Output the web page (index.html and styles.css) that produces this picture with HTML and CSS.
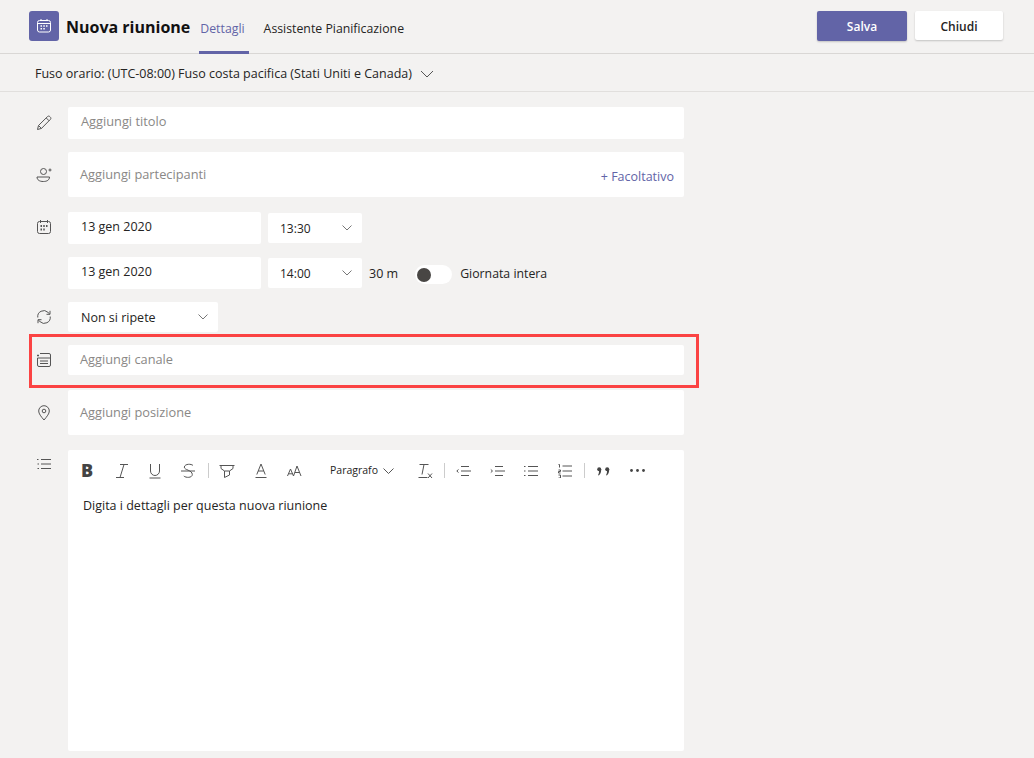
FILE: index.html
```html
<!DOCTYPE html>
<html lang="en">
<head>
  <meta charset="UTF-8">
  <title>Nuova riunione</title>
  <link rel="stylesheet" href="styles.css">
</head>
<body>
  <header class="topbar">
    <div class="app-tile">
      <svg width="16" height="16" viewBox="0 0 16 16" fill="none" stroke="#fff" stroke-width="1">
        <rect x="1.5" y="2.5" width="13" height="11.5" rx="2"/>
        <path d="M2 5.5h12"/>
        <path d="M5 1v2M11 1v2" />
        <path d="M4.5 8h1.5M7.3 8h1.5M10 8h1.5M4.5 10.7h1.5M7.3 10.7h1.5" stroke-width="1.4"/>
      </svg>
    </div>
    <h1 class="title">Nuova riunione</h1>
    <nav class="tabs">
      <a class="tab active">Dettagli</a>
      <a class="tab">Assistente Pianificazione</a>
    </nav>
    <div class="actions">
      <button class="btn primary">Salva</button>
      <button class="btn">Chiudi</button>
    </div>
  </header>

  <div class="zone">
    <span>Fuso orario: (UTC-08:00) Fuso costa pacifica (Stati Uniti e Canada)</span>
    <svg class="zone-chevron" width="14" height="8" viewBox="0 0 14 8" fill="none" stroke="#555" stroke-width="1"><path d="M1 1l6 6 6-6"/></svg>
  </div>

  <main class="form">
    <div class="row row-title">
      <svg class="row-icon" width="16" height="16" viewBox="0 0 16 16" fill="none" stroke="#555" stroke-width="1">
        <path d="M1.5 14.5l1-4L11.5 1.6c.7-.7 1.7-.7 2.3 0l.6.6c.6.6.6 1.6 0 2.2L5.5 13.4z"/>
        <path d="M2.5 10.5l3 3M10.3 3l2.8 2.8"/>
      </svg>
      <div class="field wide h32 placeholder">Aggiungi titolo</div>
    </div>

    <div class="row row-people">
      <svg class="row-icon icon-low" width="16" height="16" viewBox="0 0 16 16" fill="none" stroke="#555" stroke-width="1">
        <circle cx="7.5" cy="4.5" r="3"/>
        <path d="M1 10h12.5c0 3-2.5 4.5-6.2 4.5S1 13 1 10z"/>
        <path d="M12.5 3h3M14 1.5v3"/>
      </svg>
      <div class="field wide h45 placeholder people">
        <span>Aggiungi partecipanti</span>
        <span class="optional">+ Facoltativo</span>
      </div>
    </div>

    <div class="row row-date">
      <svg class="row-icon" width="14" height="14" viewBox="0 0 14 14" fill="none" stroke="#555" stroke-width="1">
        <rect x=".5" y="1.5" width="13" height="12" rx="2"/>
        <path d="M3.5 0v3M10.500 0v3"/>
        <path d="M3.500 6h1.500M6.250 6h1.500M9 6h1.500M3.500 9.500h1.500M6.250 9.500h1.500" stroke-width="1.800"/>
      </svg>
      <div class="field date">13 gen 2020</div>
      <div class="field time">
        <span>13:30</span>
        <svg class="chevron" width="10" height="6" viewBox="0 0 10 6" fill="none" stroke="#777" stroke-width="1"><path d="M.5.5L5 5 9.500.5"/></svg>
      </div>
    </div>

    <div class="row row-date">
      <div class="row-icon"></div>
      <div class="field date">13 gen 2020</div>
      <div class="field time">
        <span>14:00</span>
        <svg class="chevron" width="10" height="6" viewBox="0 0 10 6" fill="none" stroke="#777" stroke-width="1"><path d="M.5.5L5 5 9.500.5"/></svg>
      </div>
      <span class="duration">30 m</span>
      <span class="toggle"><span class="knob"></span></span>
      <span class="allday">Giornata intera</span>
    </div>

    <div class="row row-repeat">
      <svg class="row-icon" width="14" height="14" viewBox="0 0 14 14" fill="none" stroke="#555" stroke-width="1">
        <path d="M.8 7.500A6 6 0 0 1 11 2.400L12.700 4"/>
        <path d="M13 .8v3.500H9.500"/>
        <path d="M13.200 6.500A6 6 0 0 1 3 11.600L1.300 10"/>
        <path d="M1 13.200V9.700h3.500"/>
      </svg>
      <div class="field repeat">
        <span>Non si ripete</span>
        <svg class="chevron" width="10" height="6" viewBox="0 0 10 6" fill="none" stroke="#777" stroke-width="1"><path d="M.5.5L5 5 9.500.5"/></svg>
      </div>
    </div>

    <div class="row row-channel">
      <svg class="row-icon" width="14" height="14" viewBox="0 0 14 14" fill="none" stroke="#555" stroke-width="1">
        <path d="M3 .5h9a1.500 1.500 0 0 1 1.500 1.500v10a1.500 1.500 0 0 1-1.500 1.500H2A1.500 1.500 0 0 1 .5 12V5h13"/>
        <path d="M3 8h8M3 10.500h8"/>
        <path d="M0 2.500h2" stroke-width="1.500"/>
      </svg>
      <div class="field wide h30 placeholder">Aggiungi canale</div>
      <div class="callout"></div>
    </div>

    <div class="row row-location">
      <svg class="row-icon icon-low" width="12" height="16" viewBox="0 0 12 16" fill="none" stroke="#555" stroke-width="1">
        <path d="M6 15C3 11.500 .7 8.700 .7 6A5.300 5.300 0 0 1 11.300 6C11.300 8.700 9 11.500 6 15z"/>
        <circle cx="6" cy="6" r="1.800"/>
      </svg>
      <div class="field wide h45 placeholder">Aggiungi posizione</div>
    </div>

    <div class="row row-editor">
      <svg class="row-icon" width="14" height="12" viewBox="0 0 14 12" fill="none" stroke="#555" stroke-width="1">
        <path d="M4 1.500h10M4 6h10M4 10.500h10"/>
        <path d="M0 1.500h1.500M.5 6h1.500M.5 10.500h1.500" stroke-width="1.200"/>
      </svg>
      <div class="editor">
        <div class="toolbar">
          <span class="tool tool-bold">B</span>
          <svg class="tool-svg t-italic" width="14" height="16" viewBox="0 0 14 16" fill="none" stroke="#555"><path d="M5 1.500h8M9 1.500L5 14.500M1 14.500h8"/></svg>
          <svg class="tool-svg t-under" width="14" height="16" viewBox="0 0 14 16" fill="none" stroke="#555"><path d="M2.500 1v7a4.500 4.500 0 0 0 9 0V1M1.500 15h11"/></svg>
          <svg class="tool-svg t-strike" width="14" height="16" viewBox="0 0 14 16" fill="none" stroke="#555"><path d="M12 2.500C10.500.8 4 .5 3.300 4c-.5 3 8 3 8 7.500 0 3.500-6.500 3.500-8.500 1.500M0 8h14"/></svg>
          <span class="sep sep-a"></span>
          <svg class="tool-svg t-mark" width="16" height="16" viewBox="0 0 16 16" fill="none" stroke="#555"><path d="M.5 2.500h15M2 2.500v3l3.500 2.500v6.500l5-2.500V8L14 5.500v-3M5.500 8h5"/></svg>
          <svg class="tool-svg t-color" width="12" height="16" viewBox="0 0 12 16" fill="none" stroke="#555"><path d="M1.800 11.500L6 1l4.200 10.500M3.200 8h5.600M.5 14.500h11"/></svg>
          <svg class="tool-svg t-size" width="15" height="12" viewBox="0 0 15 12" fill="none" stroke="#555"><path d="M.5 11L3.500 4l3 7M1.500 8.800h4M6.500 11L10 1l4 10M8 7.500h4.500"/></svg>
          <span class="para">Paragrafo</span>
          <svg class="tool-svg t-parachev" width="11" height="6" viewBox="0 0 11 6" fill="none" stroke="#555"><path d="M.5.500l5 5 5-5"/></svg>
          <svg class="tool-svg t-clear" width="15" height="16" viewBox="0 0 15 16" fill="none" stroke="#555"><path d="M1.500 1.500h9M6 1.500L4 11.500M.5 14.500h9M10 10.500l4 4.500M14 10.500L10 15"/></svg>
          <span class="sep sep-b"></span>
          <svg class="tool-svg t-out" width="15" height="12" viewBox="0 0 15 12" fill="none" stroke="#555"><path d="M5 1.500h8M5 6h10M5 10.500h8M2.500 4.500L.8 6l1.700 1.500"/></svg>
          <svg class="tool-svg t-in" width="15" height="12" viewBox="0 0 15 12" fill="none" stroke="#555"><path d="M5 1.500h8M5 6h10M5 10.500h8M.8 4.500L2.500 6 .8 7.500"/></svg>
          <svg class="tool-svg t-ul" width="14" height="12" viewBox="0 0 14 12" fill="none" stroke="#555"><path d="M4 1.500h10M4 6h10M4 10.500h10M0 1.500h1.500M0 6h1.500M0 10.500h1.500"/></svg>
          <svg class="tool-svg t-ol" width="14" height="14" viewBox="0 0 14 14" fill="none" stroke="#555"><path d="M4.500 2h9.500M4.500 7h9.500M4.500 12h9.500M.5 .5h1v3M.5 6h2v1.500h-2v1.500h2M.5 11h2v3h-2"/></svg>
          <span class="sep sep-c"></span>
          <svg class="tool-svg t-quote" width="13" height="9" viewBox="0 0 13 9" fill="#444"><circle cx="2.200" cy="2.200" r="2"/><path d="M4.200 2.200C4.200 5 3.500 7 1.800 8.500L1 8c1-1.500 1-3 1-4z"/><circle cx="10.200" cy="2.200" r="2"/><path d="M12.200 2.200c0 2.800-.7 4.800-2.400 6.300L9 8c1-1.500 1-3 1-4z"/></svg>
          <svg class="tool-svg t-more" width="15" height="3" viewBox="0 0 15 3"><circle cx="1.500" cy="1.500" r="1.400" fill="#444"/><circle cx="7.500" cy="1.500" r="1.400" fill="#444"/><circle cx="13.500" cy="1.500" r="1.400" fill="#444"/></svg>
        </div>
        <p class="editor-text">Digita i dettagli per questa nuova riunione</p>
      </div>
    </div>
  </main>
</body>
</html>
```

FILE: styles.css
```css
* {
  box-sizing: border-box;
}
body {
  margin: 0;
  background-color: #f3f2f1;
  font-family: "Open Sans", "Noto Sans", sans-serif;
  font-size: 12.5px;
  color: #252423;
}
.topbar {
  display: flex;
  align-items: center;
  height: 54px;
  padding: 0 31px 2px 29px;
  border-bottom: 1px solid #d9d7d5;
}
.app-tile {
  display: flex;
  align-items: center;
  justify-content: center;
  width: 30px;
  height: 30px;
  background-color: #6264a7;
  border-radius: 3px;
}
.title {
  margin: 2px 0 0 7px;
  font-size: 16px;
  font-weight: 700;
  color: #111;
  white-space: nowrap;
}
.tabs {
  display: flex;
  margin-left: 9px;
  align-self: stretch;
}
.tab {
  display: flex;
  align-items: center;
  padding: 6px 4px 0 1px;
  margin-bottom: -3px;
  margin-right: 14px;
  font-size: 12.3px;
  border-bottom: 3px solid transparent;
  white-space: nowrap;
}
.tab.active {
  color: #6264a7;
  border-bottom-color: #6264a7;
}
.actions {
  display: flex;
  align-items: center;
  gap: 8px;
  margin-left: auto;
}
.btn {
  width: 88px;
  height: 29px;
  padding: 2px 0 0;
  font-family: inherit;
  font-size: 12px;
  font-weight: 600;
  color: #252423;
  background-color: #fff;
  border: none;
  border-radius: 2px;
  box-shadow: 0 1px 2px rgba(0, 0, 0, 0.2);
}
.btn.primary {
  width: 90px;
  height: 30px;
  color: #fff;
  background-color: #6264a7;
}
.zone {
  display: flex;
  align-items: center;
  height: 38px;
  padding: 2px 0 0 35px;
  border-bottom: 1px solid #e1dfdd;
}
.zone-chevron {
  margin-left: 8px;
}
.form {
  padding: 15px 0 0 29px;
}
.row {
  position: relative;
  display: flex;
  align-items: flex-start;
  width: 655px;
}
.row-icon {
  flex: none;
  width: 16px;
  margin: 8px 16px 0 7px;
}
.icon-low {
  margin-top: 15px;
}
.row-people { margin-top: 13px; }
.row-date { margin-top: 15px; }
.row-date + .row-date { margin-top: 13px; }
.row-repeat { margin-top: 13px; }
.row-channel { margin-top: 13px; }
.row-location { margin-top: 15px; }
.row-editor { margin-top: 15px; }
.field {
  display: flex;
  align-items: center;
  background-color: #fff;
  border-radius: 2px;
  color: #252423;
}
.placeholder {
  color: #8a8886;
  font-size: 12.8px;
}
.wide {
  flex: 1;
  padding-left: 13px;
  padding-right: 10px;
}
.h32 { height: 32px; padding-bottom: 5px; }
.h30 { height: 30px; padding-left: 12px; padding-bottom: 2px; }
.h45 { height: 45px; padding-left: 12px; padding-bottom: 2px; }
.people {
  justify-content: space-between;
}
.optional {
  margin-top: 5px;
  font-size: 12.5px;
  color: #6264a7;
}
.date {
  width: 193px;
  height: 32px;
  padding: 0 13px 3px;
}
.time {
  justify-content: space-between;
  width: 94px;
  height: 30px;
  margin: 1px 0 0 7px;
  padding: 0 10px 0 12px;
  font-size: 12px;
}
.repeat {
  justify-content: space-between;
  width: 150px;
  height: 30px;
  padding: 0 10px 0 13px;
}
.duration {
  margin: 8px 0 0 7px;
}
.toggle {
  display: flex;
  align-items: center;
  width: 37px;
  height: 19px;
  margin: 8px 0 0 17px;
  padding-left: 2px;
  background-color: #fff;
  border-radius: 10px;
}
.knob {
  width: 14px;
  height: 14px;
  background-color: #484644;
  border-radius: 50%;
}
.allday {
  margin: 8px 0 0 8px;
  font-size: 12.3px;
}
.callout {
  position: absolute;
  top: -11px;
  left: 0;
  width: 670px;
  height: 54px;
  border: 3px solid #fb4343;
  pointer-events: none;
}
.editor {
  flex: 1;
  height: 301px;
  background-color: #fff;
  border-radius: 2px;
}
.toolbar {
  position: relative;
  height: 40px;
}
.tool-svg, .tool, .para, .sep {
  position: absolute;
}
.tool-bold {
  left: 13px;
  top: 8px;
  font-size: 18px;
  font-weight: 800;
  color: #444;
}
.t-italic { left: 47px; top: 13px; }
.t-under { left: 80px; top: 13px; }
.t-strike { left: 113px; top: 13px; }
.sep {
  top: 13px;
  width: 1px;
  height: 15px;
  background-color: #ccc;
}
.sep-a { left: 140px; }
.t-mark { left: 151px; top: 13px; }
.t-color { left: 187px; top: 13px; }
.t-size { left: 219px; top: 15px; }
.para { left: 262px; top: 13px; font-size: 10.5px; color: #252423; }
.t-parachev { left: 315px; top: 18px; }
.t-clear { left: 350px; top: 13px; }
.sep-b { left: 376px; }
.t-out { left: 388px; top: 15px; }
.t-in { left: 422px; top: 15px; }
.t-ul { left: 456px; top: 15px; }
.t-ol { left: 490px; top: 14px; }
.sep-c { left: 516px; }
.t-quote { left: 529px; top: 17px; }
.t-more { left: 562px; top: 19px; }
.editor-text {
  margin: 7px 0 0 15px;
}
```
